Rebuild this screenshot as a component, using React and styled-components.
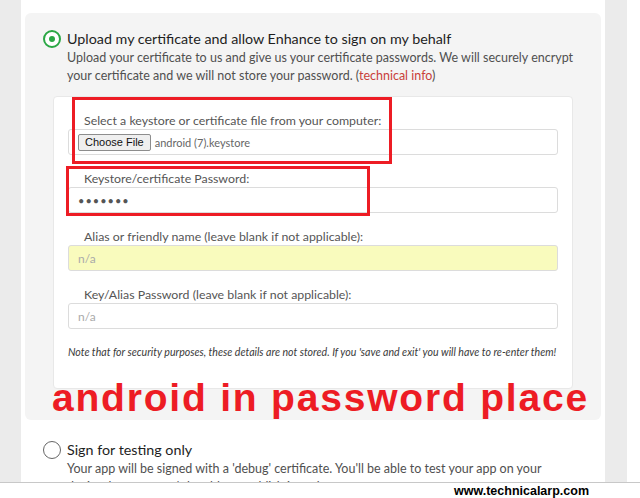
import React from "react";
import styled, { createGlobalStyle, css } from "styled-components";

const Global = createGlobalStyle`
  html, body { margin: 0; padding: 0; background: #ffffff; }
  body { font-family: Lato, "Open Sans", sans-serif; color: #222; }
  * { box-sizing: border-box; }
`;

const Page = styled.div`
  width: 640px;
  height: 498px;
  display: flex;
  flex-direction: column;
  overflow: hidden;
`;

const Main = styled.div`
  height: 482px;
  display: flex;
  overflow: hidden;
`;

const Strip = styled.div`
  flex: 0 0 ${(p) => p.$w}px;
  background: ${(p) => (p.$gray ? "#ebebeb" : "#ffffff")};
`;

const Content = styled.div`
  flex: 0 0 584px;
  background: #ffffff;
  padding: 13px 4px 0;
`;

const Option = styled.div`
  position: relative;
  padding: ${(p) => (p.$selected ? "16px 20px 31px 18px" : "20px 20px 0 18px")};
  ${(p) =>
    p.$selected &&
    css`
      background: #f4f4f4;
      border-radius: 6px;
    `}
`;

const OptionHead = styled.label`
  display: flex;
  align-items: center;
  gap: 6px;
  height: 20px;
`;

const Radio = styled.span`
  flex: 0 0 18px;
  width: 18px;
  height: 18px;
  border-radius: 50%;
  display: flex;
  align-items: center;
  justify-content: center;
  border: ${(p) => (p.$checked ? "2px solid #2aa744" : "1.5px solid #666")};
  background: #ffffff;
  &::after {
    content: "";
    display: ${(p) => (p.$checked ? "block" : "none")};
    width: 6px;
    height: 6px;
    border-radius: 50%;
    background: #2aa744;
  }
`;

const OptionTitle = styled.span`
  font-size: 14.3px;
  line-height: 20px;
  color: #1e1e1e;
`;

const OptionDesc = styled.p`
  margin: 0;
  padding-left: 24px;
  font-size: 12.5px;
  line-height: 18px;
  color: #505050;
`;

const Link = styled.a`
  color: #c9403a;
  text-decoration: none;
`;

const Card = styled.div`
  position: relative;
  margin: 11px 8px 0 10px;
  padding: 16px 14px 29px;
  background: #ffffff;
  border: 1px solid #e8e8e8;
  border-radius: 4px;
`;

const Field = styled.div`
  margin-bottom: 16px;
`;

const Label = styled.div`
  padding-left: 16px;
  font-size: 12.35px;
  line-height: 16px;
  color: #555;
`;

const boxBase = css`
  display: flex;
  align-items: center;
  width: 100%;
  height: 26px;
  border: 1px solid #dcdcdc;
  border-radius: 3px;
  background: ${(p) => (p.$autofill ? "#f9fbbd" : "#ffffff")};
`;

const FileBox = styled.div`
  ${boxBase};
  padding: 0 9px;
  gap: 4px;
`;

const FileButton = styled.span`
  display: inline-flex;
  align-items: center;
  height: 17px;
  padding: 0 6px;
  font-family: "Liberation Sans", Arial, sans-serif;
  font-size: 11px;
  color: #111;
  background: #efefef;
  border: 1px solid #8d8d8d;
  border-radius: 2px;
`;

const FileName = styled.span`
  font-size: 11px;
  color: #666;
`;

const Input = styled.input`
  ${boxBase};
  padding: 0 9px;
  font-family: Lato, sans-serif;
  font-size: 12px;
  color: #444;
  outline: none;
  &::placeholder {
    color: #aaa;
  }
  ${(p) =>
    p.type === "password" &&
    css`
      font-size: 11px;
      letter-spacing: 1px;
      color: #555;
    `}
`;

const Note = styled.p`
  margin: 2px 0 0;
  font-size: 10.6px;
  line-height: 14px;
  font-style: italic;
  color: #3a3a3a;
  white-space: nowrap;
`;

const Marker = styled.div`
  position: absolute;
  border: 3px solid #ed1c24;
  pointer-events: none;
`;

const Callout = styled.div`
  position: absolute;
  left: 27px;
  top: 365px;
  font-family: "Liberation Sans", Arial, sans-serif;
  font-weight: 700;
  font-size: 39px;
  line-height: 39px;
  letter-spacing: 1.8px;
  color: #ed1c24;
  white-space: nowrap;
  pointer-events: none;
`;

const Footer = styled.div`
  height: 16px;
  border-top: 1px solid #c8c8c8;
  display: flex;
  align-items: center;
  justify-content: flex-end;
  padding-right: 51px;
  font-family: "Liberation Sans", Arial, sans-serif;
  font-weight: 700;
  font-size: 12.5px;
  color: #000;
  background: #fff;
`;

export default function App() {
  return (
    <Page>
      <Global />
      <Main>
        <Strip $w={21} $gray />
        <Content>
          <Option $selected>
            <OptionHead>
              <Radio $checked />
              <OptionTitle>Upload my certificate and allow Enhance to sign on my behalf</OptionTitle>
            </OptionHead>
            <OptionDesc>
              Upload your certificate to us and give us your certificate passwords. We will securely encrypt
              your certificate and we will not store your password. (<Link>technical info</Link>)
            </OptionDesc>
            <Card>
              <Field>
                <Label>Select a keystore or certificate file from your computer:</Label>
                <FileBox>
                  <FileButton>Choose File</FileButton>
                  <FileName>android (7).keystore</FileName>
                </FileBox>
              </Field>
              <Field>
                <Label>Keystore/certificate Password:</Label>
                <Input type="password" defaultValue="android" readOnly />
              </Field>
              <Field>
                <Label>Alias or friendly name (leave blank if not applicable):</Label>
                <Input $autofill placeholder="n/a" readOnly />
              </Field>
              <Field>
                <Label>Key/Alias Password (leave blank if not applicable):</Label>
                <Input placeholder="n/a" readOnly />
              </Field>
              <Note>
                Note that for security purposes, these details are not stored. If you 'save and exit' you will have
                to re-enter them!
              </Note>
              <Marker style={{ left: 18, top: 0, width: 320, height: 67 }} />
              <Marker style={{ left: 12, top: 69, width: 304, height: 50 }} />
            </Card>
            <Callout>android in password place</Callout>
          </Option>
          <Option>
            <OptionHead>
              <Radio />
              <OptionTitle>Sign for testing only</OptionTitle>
            </OptionHead>
            <OptionDesc>
              Your app will be signed with a 'debug' certificate. You'll be able to test your app on your
              device, but you won't be able to publish it to the app stores.
            </OptionDesc>
          </Option>
        </Content>
        <Strip $w={22} $gray />
        <Strip $w={13} />
      </Main>
      <Footer>www.technicalarp.com</Footer>
    </Page>
  );
}
